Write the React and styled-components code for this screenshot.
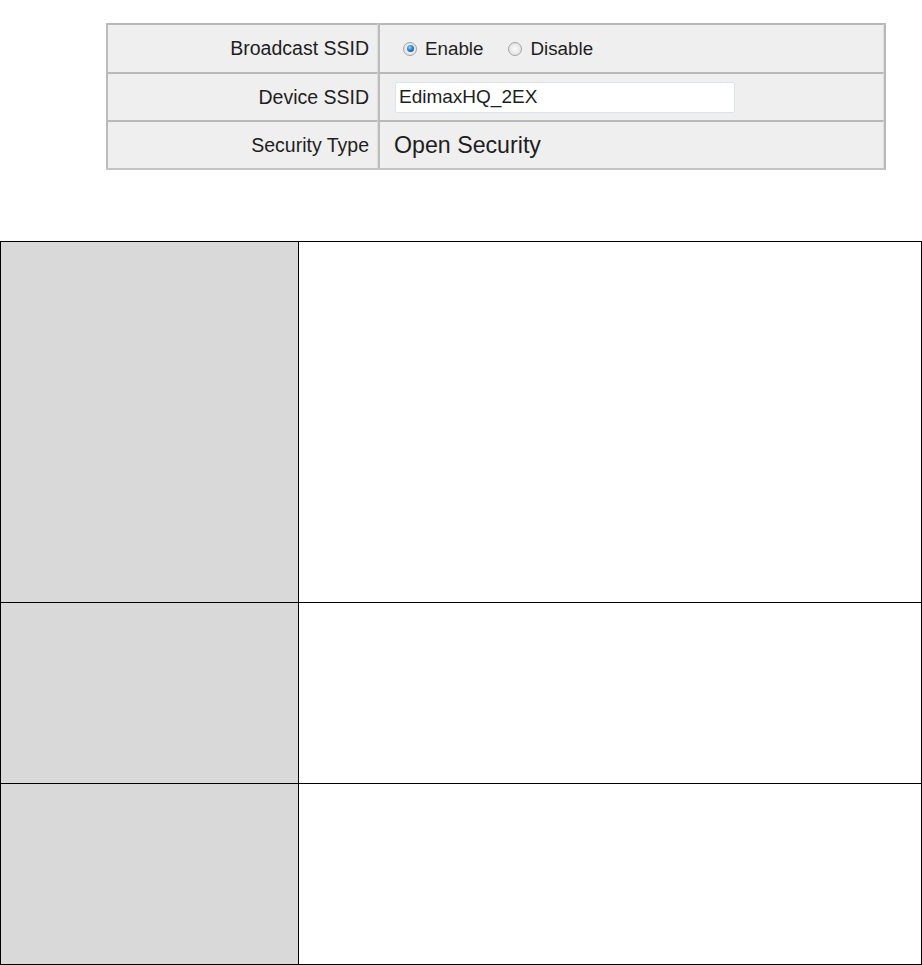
import React from 'react';
import styled, { createGlobalStyle } from 'styled-components';

const GlobalStyle = createGlobalStyle`
  html, body {
    margin: 0;
    padding: 0;
    background: #fff;
    font-family: "Liberation Sans", Arial, sans-serif;
  }
`;

const rows = [
  { label: 'Broadcast SSID', kind: 'radio', height: 49 },
  { label: 'Device SSID', kind: 'input', height: 48 },
  { label: 'Security Type', kind: 'text', height: 48 },
];

const notes = [361, 181, 181];

function Radio({ checked, children }) {
  return (
    <RadioLabel>
      <RadioDot checked={checked} />
      {children}
    </RadioLabel>
  );
}

function App() {
  return (
    <Page>
      <GlobalStyle />
      <Form>
        {rows.map((row) => (
          <Row key={row.label} $h={row.height}>
            <LabelCell>{row.label}</LabelCell>
            <ValueCell>
              {row.kind === 'radio' && (
                <>
                  <Radio checked>Enable</Radio>
                  <Radio>Disable</Radio>
                </>
              )}
              {row.kind === 'input' && <TextBox defaultValue="EdimaxHQ_2EX" />}
              {row.kind === 'text' && <Plain>Open Security</Plain>}
            </ValueCell>
          </Row>
        ))}
      </Form>
      <Notes>
        {notes.map((h, i) => (
          <React.Fragment key={i}>
            <NoteHead $h={h} />
            <NoteBody $h={h} />
          </React.Fragment>
        ))}
      </Notes>
    </Page>
  );
}

export default App;

const Page = styled.div`
  padding-top: 23px;
  width: 922px;
`;

const Form = styled.div`
  margin-left: 106px;
  width: 780px;
  display: flex;
  flex-direction: column;
  border-right: 2px solid #b8b8b8;
  border-bottom: 2px solid #c4c4c4;
  box-sizing: border-box;
  background: #efefef;
`;

const Row = styled.div`
  display: grid;
  grid-template-columns: 272px 1fr;
  height: ${(p) => p.$h}px;
`;

const Cell = styled.div`
  display: flex;
  align-items: center;
  box-sizing: border-box;
  border-top: 2px solid #b9b9b9;
  border-left: 2px solid #bcbcbc;
  border-right: 1px solid #dedede;
  background: #efefef;
  color: #1e1e1e;
`;

const LabelCell = styled(Cell)`
  justify-content: flex-end;
  padding-right: 8px;
  font-size: 19.5px;
`;

const ValueCell = styled(Cell)`
  padding-left: 14px;
  gap: 14px;
  font-size: 18.8px;
`;

const RadioLabel = styled.span`
  display: inline-flex;
  align-items: center;
  gap: 8px;
  margin-left: 9px;
  & + & {
    margin-left: 11px;
  }
`;

const RadioDot = styled.span`
  width: 14px;
  height: 14px;
  border-radius: 50%;
  box-sizing: border-box;
  border: 1px solid #a4a4a4;
  background: radial-gradient(circle at 50% 50%, #fbfbfb 0%, #e4e4e4 70%, #cfcfcf 100%);
  position: relative;
  &::after {
    content: '';
    display: ${(p) => (p.checked ? 'block' : 'none')};
    position: absolute;
    left: 2.5px;
    top: 2.5px;
    width: 7px;
    height: 7px;
    border-radius: 50%;
    background: radial-gradient(circle at 40% 35%, #8fd0ff 0%, #2a86d0 45%, #0b3e7a 100%);
  }
`;

const TextBox = styled.input`
  width: 340px;
  height: 31px;
  box-sizing: border-box;
  border: 1px solid #dde3ea;
  border-radius: 2px;
  background: #fff;
  padding: 0 3px;
  margin-left: 1px;
  font-family: "Liberation Sans", Arial, sans-serif;
  font-size: 19px;
  color: #1e1e1e;
  outline: none;
`;

const Plain = styled.span`
  font-size: 23.2px;
  color: #1e1e1e;
`;

const Notes = styled.div`
  margin-top: 71px;
  display: grid;
  grid-template-columns: 298px 1fr;
  border-top: 1px solid #000;
  border-left: 1px solid #000;
  width: 922px;
  box-sizing: border-box;
`;

const NoteHead = styled.div`
  height: ${(p) => p.$h}px;
  box-sizing: border-box;
  background: #d9d9d9;
  border-right: 1px solid #000;
  border-bottom: 1px solid #000;
`;

const NoteBody = styled.div`
  height: ${(p) => p.$h}px;
  box-sizing: border-box;
  background: #fff;
  border-right: 1px solid #000;
  border-bottom: 1px solid #000;
`;
